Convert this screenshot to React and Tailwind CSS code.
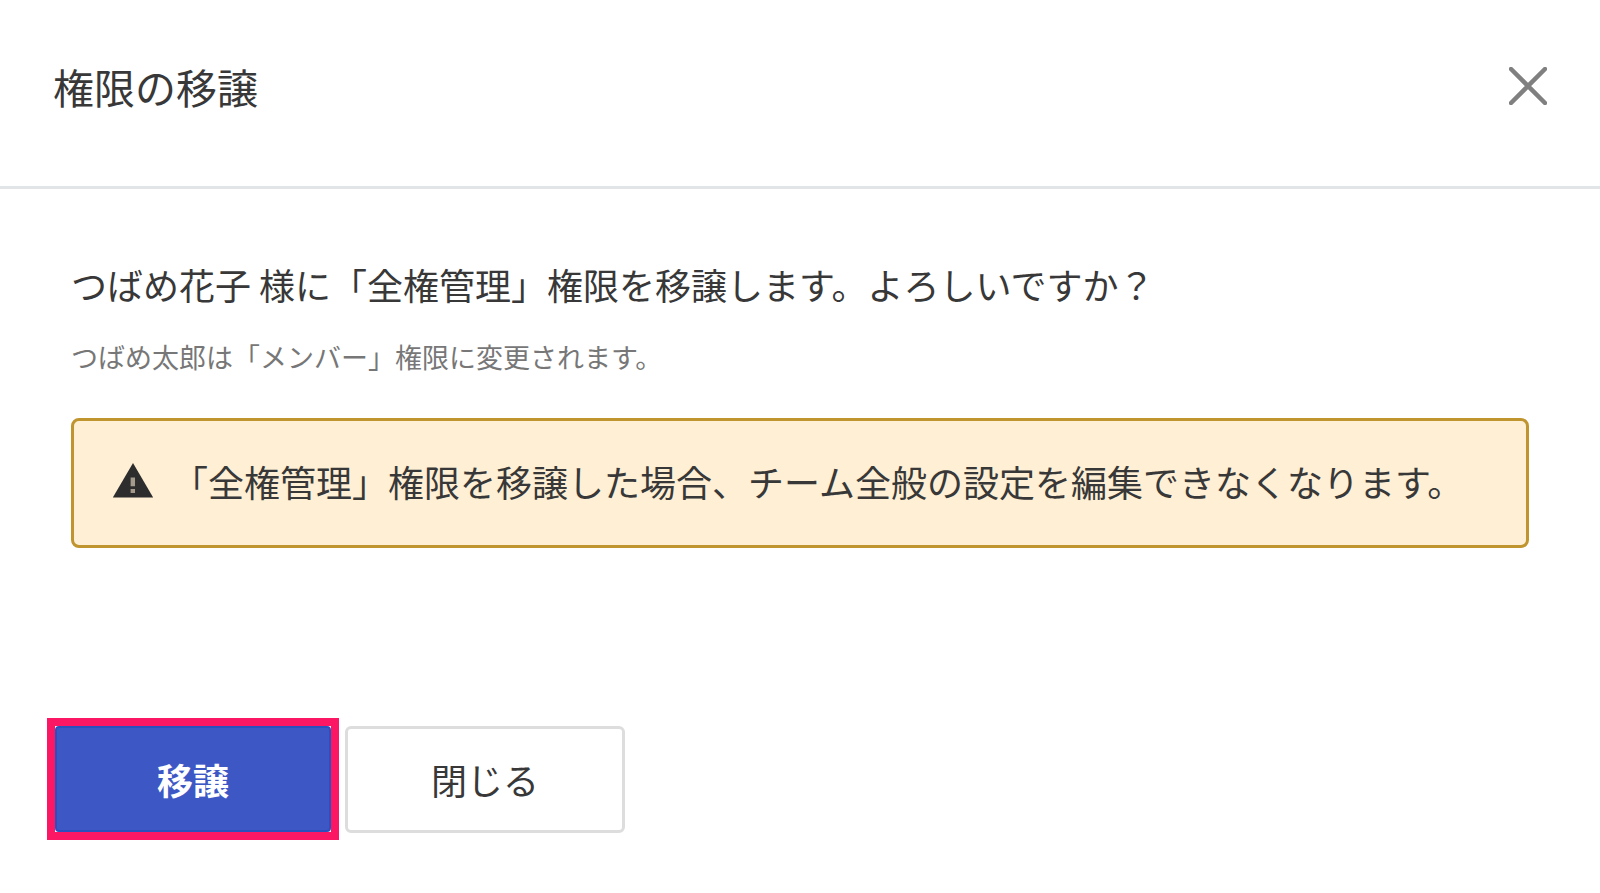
function CloseIcon() {
  return (
    <svg viewBox="0 0 38 38" className="block size-[38px]" aria-hidden="true">
      <path d="M2 2 36 36M36 2 2 36" fill="none" stroke="#808080" strokeWidth="4.5" strokeLinecap="round" />
    </svg>
  );
}

function WarningIcon() {
  return (
    <svg viewBox="0 0 24 24" className="block size-11 shrink-0" fill="#2d2d2d" aria-hidden="true">
      <path d="M1 21 12 2.2 23 21z" />
      <path d="M10.7 10.1h2.4v4.8h-2.4zM10.7 16.3h2.4v2.2h-2.4z" fill="#a39a8b" />
    </svg>
  );
}

export default function App() {
  return (
    <div
      role="dialog"
      aria-labelledby="dialog-title"
      className="min-h-screen bg-white font-['Noto_Sans_CJK_JP',sans-serif] text-[#383838]"
    >
      <header className="flex items-start justify-between border-b-3 border-[#e1e5e8] pt-14 pr-[53px] pb-[70px] pl-[53px]">
        <h1 id="dialog-title" className="text-[41px] leading-[60px] font-normal">
          権限の移譲
        </h1>
        <button type="button" aria-label="閉じる" className="mt-[11px]">
          <CloseIcon />
        </button>
      </header>

      <main className="px-[71px] pt-[68px]">
        <p className="text-4xl leading-[54px]">
          つばめ花子 様に「全権管理」権限を移譲します。よろしいですか？
        </p>
        <p className="mt-[26px] text-[27px] leading-10 text-[#777777]">
          つばめ太郎は「メンバー」権限に変更されます。
        </p>
        <div
          role="alert"
          className="mt-[41px] flex items-center gap-[17px] rounded-lg border-3 border-[#c0942f] bg-[#feefd5] px-[37px] pt-[30px] pb-[34px]"
        >
          <WarningIcon />
          <p className="text-4xl leading-[60px]">
            「全権管理」権限を移譲した場合、チーム全般の設定を編集できなくなります。
          </p>
        </div>
      </main>

      <footer className="flex items-center gap-[6px] px-[47px] pt-[170px] pb-[52px]">
        <div className="border-8 border-[#fb1763] bg-white">
          <button
            type="button"
            className="block h-[106px] w-[276px] rounded-sm border-2 border-[#2b50bd] bg-[#3d58c5] text-4xl font-bold text-white"
          >
            移譲
          </button>
        </div>
        <button
          type="button"
          className="h-[107px] w-[280px] rounded-md border-3 border-[#dddddd] bg-white text-4xl"
        >
          閉じる
        </button>
      </footer>
    </div>
  );
}
